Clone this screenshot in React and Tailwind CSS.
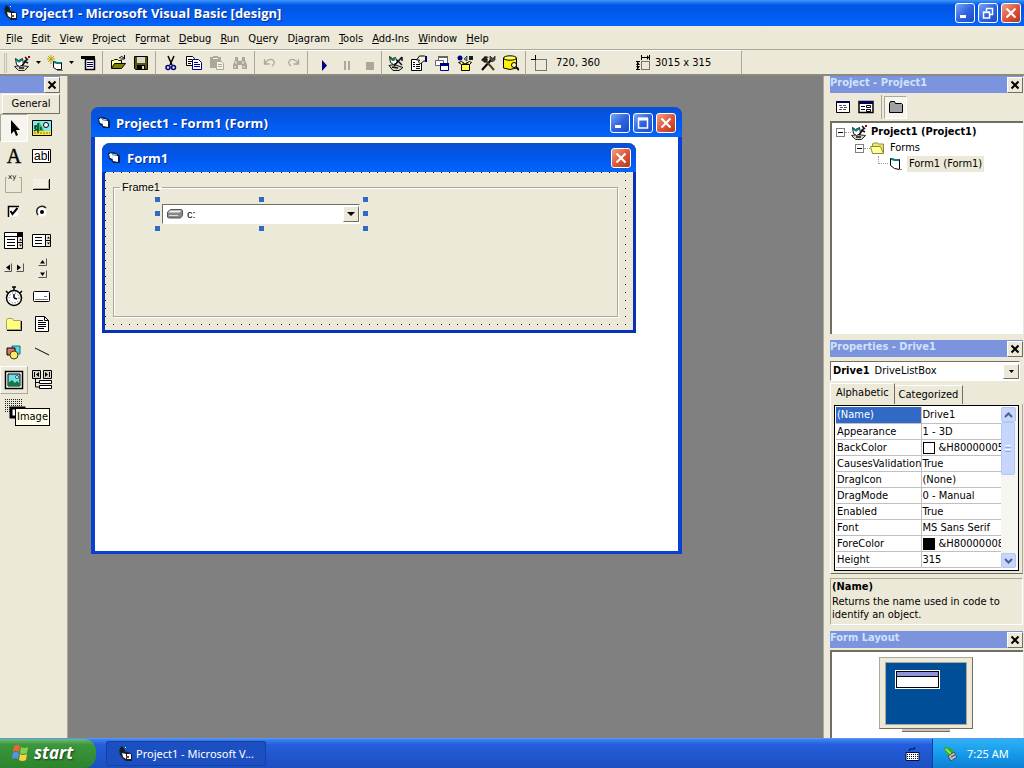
import React, { useState } from "react";

const menus = [
  ["", "F", "ile"],
  ["", "E", "dit"],
  ["", "V", "iew"],
  ["", "P", "roject"],
  ["F", "o", "rmat"],
  ["", "D", "ebug"],
  ["", "R", "un"],
  ["Q", "u", "ery"],
  ["D", "i", "agram"],
  ["", "T", "ools"],
  ["", "A", "dd-Ins"],
  ["", "W", "indow"],
  ["", "H", "elp"],
];

const properties = [
  ["(Name)", "Drive1"],
  ["Appearance", "1 - 3D"],
  ["BackColor", "&H80000005", "bg-white"],
  ["CausesValidation", "True"],
  ["DragIcon", "(None)"],
  ["DragMode", "0 - Manual"],
  ["Enabled", "True"],
  ["Font", "MS Sans Serif"],
  ["ForeColor", "&H80000008", "bg-black"],
  ["Height", "315"],
];

// 16px icons: toolbar, tree and captions
const icons = {
  project: (
    <>
      <path d="M.500 11.500l6-1 8 1-4 4-6 0z" fill="#d8d4c4" stroke="#222" />
      <path d="M1.500 3.500l3 2 4-2 1 6-4 2-3-2z" fill="#fff" stroke="#111" />
      <path d="M2 4.500l3 2 3-2" stroke="#008070" strokeWidth="2" fill="none" />
      <path d="M8 11l5-7M11 2l3 3M10 6l4 2M5 13h5" stroke="#111" strokeWidth="1.500" />
      <path d="M14 1h2v2h-2z" fill="#a00000" />
    </>
  ),
  addForm: (
    <>
      <path d="M4 0v9M0 4h8M1 1l6 6M7 1L1 7" stroke="#b8a000" />
      <path d="M6.500 6.500l3 1h5v7l-5 0-3-2z" fill="#fff" stroke="#111" />
      <path d="M7 7l3 1h4" stroke="#008080" strokeWidth="2" fill="none" />
      <path d="M10 15h6v1h-6z" fill="#777" />
    </>
  ),
  menuEditor: (
    <>
      <path d="M1 1h14v3H1z" fill="#000" />
      <path d="M5.500 4.500h9v10h-9z" fill="#fff" stroke="#000" strokeWidth="1.500" />
      <path d="M7 7.500h6M7 9.500h6M7 11.500h6" stroke="#000060" />
    </>
  ),
  open: (
    <>
      <path d="M1.500 13.500v-8h2l1-1h3l1 1h3v3" fill="#ffff9c" stroke="#000" />
      <path d="M1.500 13.500l3-5h11l-4 5z" fill="#808000" stroke="#000" />
      <path d="M9 3q3-3 5 0M14.500 0v4h-4" fill="none" stroke="#000" />
    </>
  ),
  save: (
    <>
      <path d="M1.500 1.500h13v13h-12l-1-1z" fill="#555510" stroke="#000" />
      <path d="M4 2h8v6H4z" fill="#d8d8c8" />
      <path d="M4 10h8v4H4z" fill="#000" />
      <path d="M9 11h2v3H9z" fill="#d8d8c8" />
    </>
  ),
  cut: (
    <>
      <path d="M5 1l4 9M11 1L7 10" stroke="#000" strokeWidth="1.500" />
      <circle cx="5" cy="12.500" r="2" fill="none" stroke="#000080" strokeWidth="1.500" />
      <circle cx="10.500" cy="12.500" r="2" fill="none" stroke="#000080" strokeWidth="1.500" />
    </>
  ),
  copy: (
    <>
      <path d="M.500 1.500h6l2 2v7h-8z" fill="#fff" stroke="#000" />
      <path d="M2 4.500h4M2 6.500h4M2 8.500h3" stroke="#000" />
      <path d="M6.500 4.500h6l3 3v7h-9z" fill="#fff" stroke="#000080" />
      <path d="M8 7.500h4M8 9.500h6M8 11.500h6" stroke="#000080" />
    </>
  ),
  paste: (
    <>
      <path d="M1 2h3V1h5v1h3v11H1z" fill="#aca899" />
      <path d="M4 3h5v1H4z" fill="#eee" />
      <path d="M7.500 6.500h5l2 2v6h-7z" fill="#f4f2e8" stroke="#aca899" />
      <path d="M9 9.500h4M9 11.500h4" stroke="#aca899" />
    </>
  ),
  find: (
    <>
      <path d="M3 2h3v3l1 1h2l1-1V2h3v3l2 5v4h-5v-4H6v4H1v-4l2-5z" fill="#aca899" />
      <path d="M4 6v3M11 6v3M3 11v2M12 11v2" stroke="#f4f2e8" />
    </>
  ),
  undo: <path d="M2.500 4v5h5M3 8q4-5 8-3 3 3-1 6" fill="none" stroke="#aca899" strokeWidth="1.300" />,
  redo: <path d="M13.500 4v5h-5M13 8q-4-5-8-3-3 3 1 6" fill="none" stroke="#aca899" strokeWidth="1.300" />,
  play: <path d="M6 5v11l5-5.500z" fill="#000080" />,
  pause: <path d="M5 6h2v9H5zM9 6h2v9H9z" fill="#aca899" />,
  stop: <path d="M4 7h8v8H4z" fill="#aca899" />,
  explorer: (
    <>
      <path d="M1 10.500l5-1 9 3-4 3-6 0z" fill="#d8d4c4" stroke="#111" />
      <path d="M1.500 1.500l3 2 3-1 2 5-4 2-3-2z" fill="#fff" stroke="#111" />
      <path d="M2 3l3 2 2-1" stroke="#008040" strokeWidth="2" fill="none" />
      <path d="M6 11l8-9M9 5l5 5M14 2v4M4 12l6 1" stroke="#111" strokeWidth="1.500" />
    </>
  ),
  propsWindow: (
    <>
      <path d="M.500 4.500h10v11H.500z" fill="#fff" stroke="#000" />
      <path d="M2 7.500h2M2 9.500h2M2 11.500h2M5 9.500h4M5 11.500h4M5 13.500h4" stroke="#000" />
      <path d="M5.500 5l3-4h5l2 1v4l-3 0-3 3-2-2 1-2z" fill="#f4f0dc" stroke="#000" />
      <path d="M14 1h2v6h-2z" fill="#000080" />
    </>
  ),
  formLayout: (
    <>
      <path d="M4.500 1.500h9v7h-9z" fill="#fff" stroke="#666" />
      <path d="M4 1h10v2H4z" fill="#666" />
      <path d="M1.500 5.500h8v5h-8z" fill="#fff" stroke="#666" />
      <path d="M6.500 9.500h8v6h-8z" fill="#fff" stroke="#000080" />
      <path d="M6 8h9v3H6z" fill="#000080" />
    </>
  ),
  objectBrowser: (
    <>
      <circle cx="3" cy="3" r="2.500" fill="#000080" />
      <path d="M7 4l3-3v5z" fill="#7fb0b0" stroke="#000" strokeWidth=".6" />
      <path d="M12 1h4v4h-4z" fill="#102020" />
      <path d="M4.500 9.500h8v6h-8z" fill="#ffff40" stroke="#000" />
      <path d="M4.500 9.500l-3-2 3-1 3 2zM12.500 9.500l2-2-2-1-4 2z" fill="#ffff90" stroke="#000" />
    </>
  ),
  toolbox: (
    <>
      <path d="M2 15L11 5" stroke="#000" strokeWidth="2" />
      <path d="M14 15L6 6" stroke="#504020" strokeWidth="2" />
      <path d="M1 5l4-4 4 1-2 1 1 2-3 3z" fill="#222" />
      <path d="M10 5V1l2 2 2 0 1-2v4l-3 2z" fill="#555" stroke="#000" strokeWidth=".6" />
    </>
  ),
  dataView: (
    <>
      <path d="M.500 3v10q6.500 3 13 0V3" fill="#fff200" stroke="#000" />
      <ellipse cx="7" cy="3" rx="6.500" ry="2.200" fill="#ffff60" stroke="#000" />
      <circle cx="11" cy="10" r="2.500" fill="#f8f8c0" stroke="#000" />
      <path d="M13 12l3 3" stroke="#000" strokeWidth="2" />
    </>
  ),
  position: (
    <>
      <path d="M4.500 4.500h11v11h-11z" fill="none" stroke="#000" strokeDasharray="1 1" />
      <path d="M0 4.500h5M4.500 0v5" stroke="#000" />
    </>
  ),
  size: (
    <>
      <path d="M6.500 6.500h8v8h-8z" fill="none" stroke="#000" strokeDasharray="1 1" />
      <path d="M6.500 0v5M14.500 0v5M7 2.500h7M1 6.500h4M1 14.500h4M2.500 7v7" stroke="#000" />
      <path d="M12 0v5l2-2.500zM1 11h4l-2 3zM1 10h4l-2-3z" fill="#000" />
    </>
  ),
  viewCode: (
    <>
      <path d="M1.500 2.500h13v11h-13z" fill="#fff" stroke="#000" />
      <path d="M1 2h14v2H1z" fill="#000060" />
      <path d="M4 6.500h7M5 8.500h7M4 10.500h7" stroke="#555" strokeDasharray="3 1" />
    </>
  ),
  viewObject: (
    <>
      <path d="M1 2.500h14v11H1z" fill="#fff" stroke="#000" strokeWidth="1.500" />
      <path d="M1 2h14v3H1z" fill="#000060" />
      <path d="M3 7.500h4M3 10.500h4M8.500 6.500h4v2h-4zM8.500 10.500h4v2h-4z" stroke="#000" fill="none" />
    </>
  ),
  grayFolder: <path d="M1.500 13.500v-9l1-2h4l1 2h6l1 1v8z" fill="#a0a0a0" stroke="#000" />,
  openFolder: (
    <>
      <path d="M2.500 13V4l1-1h4l1 1h5v9z" fill="#e8e878" stroke="#8c8c30" />
      <path d="M.500 6.500h10l3 7h-11z" fill="#ffffa0" stroke="#8c8c30" />
    </>
  ),
  form: (
    <>
      <path d="M2.500 2.500l4 1h5v10l-5-1-4-3z" fill="#fff" stroke="#000" />
      <path d="M3 3l4 1h4" stroke="#008080" strokeWidth="2" fill="none" />
      <path d="M11 13.500h3" stroke="#777" />
    </>
  ),
  caption: (
    <>
      <path d="M2 3l5-1 5 2 2 2v7l-7 0-1-2-3-2z" fill="#06184c" />
      <path d="M3 4l3 0 1 5-3-1z" fill="#fff" />
      <path d="M6 5l6 1 0 6-5-1z" fill="#fff" />
      <path d="M4 3.500l7 1.500" stroke="#b8d8e8" />
    </>
  ),
  vb: (
    <>
      <path d="M4 0l3 2 1 3-3 2-3-2z" fill="#102020" />
      <path d="M2 7l4-2 5 1 4 2v7l-6 0-4-3z" fill="#142028" />
      <path d="M5 7l4 1v5L6 11zM10 8h4v5h-4z" fill="#fff" />
      <path d="M9 10h3v2H9z" fill="#803838" />
      <path d="M8 1l1 1" stroke="#fff" />
    </>
  ),
  keyboard: (
    <>
      <path d="M2 6.500h13v8H2z" fill="#fff" stroke="#001040" />
      <path d="M3 8.500h11M3 10.500h11M3 12.500h11" stroke="#001040" strokeDasharray="1 1" />
      <path d="M5 5q0-3 3-2t3-2" stroke="#001040" fill="none" />
    </>
  ),
  tray: (
    <>
      <path d="M1 1l7 1 3 4-4 5-4-3z" fill="#30b030" />
      <path d="M3 3l5 5" stroke="#b0f060" strokeWidth="1.500" />
      <path d="M5 10l6-4 3 5-6 4z" fill="#b8c0c8" stroke="#405060" />
      <path d="M8 11l4-2" stroke="#333" />
    </>
  ),
};

// 20px toolbox icons
const tools = [
  ["Pointer", <path d="M7 2v14l3-3 2 5 2-1-2-5h4z" fill="#000" />],
  ["PictureBox", (
    <>
      <path d="M.500 2.500h19v15H.500z" fill="#7fe8f0" stroke="#000" />
      <path d="M1 13h18v4H1z" fill="#ffe640" />
      <path d="M3 13l4-9 2 3 3 6z" fill="#40b060" />
      <path d="M6 15V5M3 11V8h2M9 12V9M2 13l3-2" stroke="#004820" strokeWidth="1.500" />
      <circle cx="14" cy="7" r="2.500" fill="#fff" stroke="#000" />
      <path d="M2 15h16" stroke="#907000" strokeDasharray="2 1" />
    </>
  )],
  ["Label", (
    <text x="10" y="17" textAnchor="middle" fontSize="20" stroke="#000" strokeWidth=".4" fontFamily="Liberation Serif, serif">A</text>
  )],
  ["TextBox", (
    <>
      <path d="M.500 3.500h18v13H.500z" fill="#fff" stroke="#000" />
      <text x="2" y="14" fontSize="12" fontFamily="Liberation Sans, sans-serif">ab</text>
      <path d="M16.500 5v10" stroke="#000" />
    </>
  )],
  ["Frame", (
    <>
      <path d="M3 3.500H1.500v15h16v-15H15" fill="none" stroke="#aca899" />
      <text x="4" y="5" fontSize="7" fontFamily="DejaVu Sans, sans-serif">xy</text>
    </>
  )],
  ["CommandButton", (
    <>
      <path d="M1 5h17v11H1z" fill="#f4f1e4" />
      <path d="M1 15.500h16.500V5" fill="none" stroke="#000" />
      <path d="M2 14.500h14.500V6" fill="none" stroke="#aca899" />
    </>
  )],
  ["CheckBox", (
    <>
      <path d="M4.500 4.500h10v10h-10z" fill="#fff" />
      <path d="M4.500 15V4.500H15" fill="none" stroke="#000" strokeWidth="1.500" />
      <path d="M6.500 9l2 3 5-6" fill="none" stroke="#000" strokeWidth="2" />
    </>
  )],
  ["OptionButton", (
    <>
      <circle cx="10" cy="10" r="4.500" fill="#fff" />
      <path d="M6 13a5 5 0 0 1 8-7" fill="none" stroke="#222" strokeWidth="1.500" />
      <circle cx="10" cy="10" r="2" fill="#000" />
    </>
  )],
  ["ComboBox", (
    <>
      <path d="M.500 2.500h13v16H.500z" fill="#fff" stroke="#000" />
      <path d="M13.500 2.500h5v16h-5zM1 6.500h18M14 12.500h5" fill="#ece9d8" stroke="#000" />
      <path d="M14 2h5v4h-5z" fill="#000" />
      <path d="M3 9.500h8M3 12.500h8M3 15.500h8" stroke="#000" />
      <path d="M15 10.500h3l-1.500-2zM15 14.500h3l-1.500 2z" fill="#000" />
    </>
  )],
  ["ListBox", (
    <>
      <path d="M.500 4.500h13v12H.500z" fill="#fff" stroke="#000" />
      <path d="M13.500 4.500h5v12h-5zM14 10.500h5" fill="#ece9d8" stroke="#000" />
      <path d="M3 7.500h7M3 10.500h7M3 13.500h7" stroke="#000" />
      <path d="M15 8.500h3l-1.500-2zM15 12.500h3l-1.500 2z" fill="#000" />
    </>
  )],
  ["HScrollBar", (
    <>
      <path d="M.500 13.500h7v-8M12.500 13.500h7v-8" fill="none" stroke="#555" />
      <path d="M2 9.500l4-3v6zM17 9.500l-4-3v6z" fill="#000" />
    </>
  )],
  ["VScrollBar", (
    <>
      <path d="M6.500 7.500h8v-7M6.500 19.500h8v-7" fill="none" stroke="#555" />
      <path d="M8 5.500h5L10.500 2zM8 14.500h5L10.500 18z" fill="#000" />
    </>
  )],
  ["Timer", (
    <>
      <circle cx="10" cy="12" r="7.500" fill="#fff" stroke="#000" strokeWidth="1.500" />
      <circle cx="10" cy="12" r="5" fill="none" stroke="#444" strokeDasharray="1 2" />
      <path d="M10 12V8M10 12l3 1M8 1h4M10 1v3M2 5l2 2M18 5l-2 2" stroke="#000" strokeWidth="1.500" />
    </>
  )],
  ["DriveListBox", (
    <>
      <rect x="1.500" y="5.500" width="16" height="10" rx="1" fill="#fff" stroke="#000" />
      <path d="M3 13.500h13M12 10.500h3" stroke="#777" />
    </>
  )],
  ["DirListBox", (
    <>
      <path d="M2.500 15.500v-9l1-2h5l1 2h7v9z" fill="#ffff80" stroke="#aca060" />
      <path d="M3 16.500h14.500V7" fill="none" stroke="#000" />
    </>
  )],
  ["FileListBox", (
    <>
      <path d="M3.500 2.500h9l4 4v11h-13z" fill="#fff" stroke="#000" />
      <path d="M12.500 2.500v4h4M6 6.500h5M6 8.500h8M6 10.500h8M6 12.500h8M6 14.500h6" fill="none" stroke="#000" />
    </>
  )],
  ["Shape", (
    <>
      <path d="M8 4h8v8H8z" fill="#50d8e0" stroke="#007090" />
      <path d="M3 6h8v7H3z" fill="#e07070" stroke="#000" />
      <circle cx="10" cy="13" r="4" fill="#ffe870" stroke="#504000" />
    </>
  )],
  ["Line", <path d="M3 6l14 7" stroke="#000" />],
  ["Image", (
    <>
      <path d="M1.500 1.500h17v17h-17z" fill="#fff" stroke="#000" strokeWidth="1.500" />
      <path d="M4 4h12v12H4z" fill="#70e0e8" stroke="#000" />
      <path d="M4 16v-3l4-3 3 3 2-2 3 3v2z" fill="#107840" />
      <circle cx="13" cy="7" r="1.500" fill="#fff" stroke="#000" strokeWidth=".6" />
    </>
  )],
  ["Data", (
    <>
      <path d="M.500 .500h8v8h-8zM11.500 .500h8v8h-8z" fill="#d8d4c8" stroke="#000" />
      <path d="M2.500 2v5M17.500 2v5" stroke="#000" />
      <path d="M7 2v5L4 4.500zM13 2v5l3-2.500z" fill="#000" />
      <path d="M3.500 9v8h4M4 12.500h3" fill="none" stroke="#000" />
      <path d="M7.500 10.500h12v3h-12zM7.500 15.500h12v3h-12z" fill="#fff" stroke="#000" />
    </>
  )],
  ["OLE", (
    <>
      <path d="M1 1.500h17M1 3.500h17M1 5.500h17M1 7.500h17M1 9.500h17M1 11.500h17M1 13.500h17" stroke="#222" strokeDasharray="1 1" />
      <path d="M7 10h13v9H7z" fill="#fff" stroke="#000" strokeWidth="3" />
    </>
  )],
];

function Icon({ name, size = 16 }) {
  return (
    <svg width={size} height={size} viewBox="0 0 16 16" className="shrink-0" fill="none" aria-hidden="true">
      {icons[name]}
    </svg>
  );
}

function CaptionButton({ kind }) {
  const color =
    kind === "Close"
      ? "bg-linear-to-br from-[#f0a088] via-[#e0563a] to-[#b83818]"
      : "bg-linear-to-br from-[#7ca4f4] via-[#3064e0] to-[#1c4cc8]";
  return (
    <button aria-label={kind} className={`w-5 h-5 shrink-0 rounded-[3px] border border-white ${color}`}>
      <svg viewBox="0 0 18 18" className="w-full h-full" fill="none" stroke="#fff" aria-hidden="true">
        {kind === "Close" && <path d="M4.500 4.500l9 9M13.500 4.500l-9 9" strokeWidth="2.200" />}
        {kind === "Minimize" && <path d="M4 12.500h6" strokeWidth="3" />}
        {kind === "Maximize" && <path d="M4.500 4v10h9V4M4 4.500h10" strokeWidth="1.500" />}
        {kind === "Maximize" && <path d="M4 5h10" strokeWidth="3" />}
        {kind === "Restore" && (
          <path d="M4.500 8h6v6h-6zM4 8.500h7M7.500 7V4.500h6v6H11M7 4.500h7" strokeWidth="1.500" />
        )}
      </svg>
    </button>
  );
}

function PanelHeader({ title }) {
  return (
    <div className="flex h-[17px] shrink-0 items-center justify-between bg-[#7c94de]">
      <h2 className="pb-1 font-bold text-[#cfe2fc] whitespace-nowrap">{title}</h2>
      <button
        aria-label="Close"
        className="flex h-4 w-4 shrink-0 items-center justify-center border border-t-white border-l-white border-r-[#716f64] border-b-[#716f64] bg-[#ece9d8]"
      >
        <svg width="10" height="10" viewBox="0 0 10 10" stroke="#000" strokeWidth="2" aria-hidden="true">
          <path d="M1.500 1.500l7 7M8.500 1.500l-7 7" />
        </svg>
      </button>
    </div>
  );
}

function ToolButton({ name, label }) {
  return (
    <button aria-label={label || name} className="flex h-6 w-[23px] shrink-0 items-center justify-center">
      <Icon name={name} />
    </button>
  );
}

function DropArrow() {
  return (
    <svg width="5" height="3" viewBox="0 0 5 3" className="shrink-0" aria-hidden="true">
      <path d="M0 0h5L2.500 3z" fill="#000" />
    </svg>
  );
}

function Separator() {
  return <div className="mx-[3px] h-6 w-px shrink-0 bg-[#aca899]" />;
}

function Toolbar() {
  return (
    <div className="flex h-[27px] shrink-0 border-t border-b-2 border-t-[#aca899] border-b-[#8c8a80]">
      <div className="flex items-center border-t border-r border-t-white border-r-[#aca899] pr-[30px] pl-1">
        <div className="mr-[3px] h-5 w-[3px] border-x border-[#c4c0b0]" />
        <ToolButton name="project" label="Add Project" />
        <button aria-label="Project types" className="flex w-[10px] justify-center"><DropArrow /></button>
        <ToolButton name="addForm" label="Add Form" />
        <button aria-label="Form types" className="flex w-[10px] justify-center"><DropArrow /></button>
        <ToolButton name="menuEditor" label="Menu Editor" />
        <Separator />
        <ToolButton name="open" />
        <ToolButton name="save" />
        <Separator />
        <ToolButton name="cut" />
        <ToolButton name="copy" />
        <ToolButton name="paste" />
        <ToolButton name="find" />
        <Separator />
        <ToolButton name="undo" />
        <ToolButton name="redo" />
        <Separator />
        <div className="flex pl-px">
          <ToolButton name="play" />
          <ToolButton name="pause" />
          <ToolButton name="stop" />
        </div>
        <div className="h-6 w-px shrink-0 bg-[#aca899]" />
        <div className="flex pl-[2px]">
          <ToolButton name="explorer" />
          <ToolButton name="propsWindow" />
          <ToolButton name="formLayout" />
          <ToolButton name="objectBrowser" />
          <ToolButton name="toolbox" />
          <ToolButton name="dataView" />
        </div>
        <Separator />
        <div className="flex w-[106px] items-center gap-[9px] pl-[2px]">
          <Icon name="position" />
          <span>720, 360</span>
        </div>
        <div className="flex items-center gap-1 whitespace-nowrap">
          <Icon name="size" />
          <span>3015 x 315</span>
        </div>
      </div>
    </div>
  );
}

function Toolbox() {
  const [active, setActive] = useState("Pointer");

  return (
    <aside className="w-[68px] shrink-0 border-r border-[#aca899] pr-[7px]">
      <PanelHeader title="" />
      <button className="mt-px ml-[2px] h-5 w-[58px] border border-t-white border-l-white border-r-[#716f64] border-b-[#716f64]">
        General
      </button>
      <div className="relative grid grid-cols-[28px_28px]">
        {tools.map(([name, art]) => (
          <button
            key={name}
            aria-label={name}
            onClick={() => setActive(name)}
            className={`flex h-7 w-7 items-center justify-center ${
              active === name
                ? "border border-t-[#aca899] border-l-[#aca899] border-r-white border-b-white bg-[#f6f4ec]"
                : name === "Image"
                ? "border border-t-white border-l-white border-r-[#aca899] border-b-[#aca899]"
                : ""
            }`}
          >
            <svg width="20" height="20" viewBox="0 0 20 20" className="shrink-0 overflow-visible" fill="none" aria-hidden="true">
              <g fill="#000">{art}</g>
            </svg>
          </button>
        ))}
        <div role="tooltip" className="absolute bottom-[-4px] left-[15px] border border-black bg-[#ffffe9] px-px leading-4">
          Image
        </div>
      </div>
    </aside>
  );
}

const handles = [
  "left-[-8px] top-[-8px]",
  "left-[96px] top-[-8px]",
  "right-[-9px] top-[-8px]",
  "left-[-8px] top-[6px]",
  "right-[-9px] top-[6px]",
  "left-[-8px] bottom-[-8px]",
  "left-[96px] bottom-[-8px]",
  "right-[-9px] bottom-[-8px]",
];

const titleBar =
  "flex shrink-0 items-center bg-linear-to-b from-[#0a4fd0] via-[#0058ee] to-[#0464fc] font-['Open_Sans',sans-serif] text-[13px] font-bold text-white [text-shadow:1px_1px_#0a2a8c]";

function Designer() {
  return (
    <main className="relative min-w-0 flex-1 overflow-hidden bg-[#808080]">
      <section className="absolute top-[31px] left-[23px] flex h-[447px] w-[591px] flex-col rounded-t-lg border-x-4 border-b-[3px] border-[#0a3fd4] bg-white">
        <header className={`${titleBar} -mx-1 h-[30px] gap-1 rounded-t-lg px-[6px] pt-px pl-[5px]`}>
          <Icon name="caption" />
          <h2 className="grow">Project1 - Form1 (Form)</h2>
          <div className="flex gap-[3px]">
            <CaptionButton kind="Minimize" />
            <CaptionButton kind="Maximize" />
            <CaptionButton kind="Close" />
          </div>
        </header>
        <div className="mt-[6px] ml-[7px] flex h-[190px] w-[534px] flex-col rounded-t-lg border-x-[3px] border-b-[3px] border-[#0831b8] bg-[#ece9d8]">
          <header className={`${titleBar} -mx-[3px] h-[29px] gap-[5px] rounded-t-lg pr-[5px] pl-1`}>
            <Icon name="caption" />
            <h3 className="grow">Form1</h3>
            <CaptionButton kind="Close" />
          </header>
          <div className="flex-1 bg-[conic-gradient(from_270deg_at_1px_1px,#000_90deg,transparent_0)] bg-[length:8px_8px] pt-2 pr-[15px] pb-[13px] pl-2">
            <div className="h-full bg-[#ece9d8]">
              <fieldset className="h-full border border-[#aca899] pl-12 shadow-[1px_1px_#fff,inset_1px_1px_#fff]">
                <legend className="-ml-[42px] px-[2px] font-['Liberation_Sans',sans-serif] text-[11px] leading-[14px]">Frame1</legend>
                <div className="relative mt-[10px] flex h-5 w-[198px] items-center border border-t-[#716f64] border-l-[#716f64] border-r-white border-b-white bg-white">
                  <svg width="16" height="10" viewBox="0 0 16 10" className="ml-1 shrink-0" aria-hidden="true">
                    <path d="M.500 3l3-2.500h11l1 1v5l-2 2.500h-12l-1-1z" fill="#888" stroke="#555" />
                    <path d="M1 3.500l2.500-2h11l-2 2z" fill="#eee" />
                    <path d="M2 6.500h9" stroke="#ddd" />
                  </svg>
                  <select aria-label="Drive" className="h-full grow appearance-none pl-1 font-['Liberation_Sans',sans-serif] text-[11px] outline-none">
                    <option>c:</option>
                  </select>
                  <span className="pointer-events-none flex h-4 w-4 items-center justify-center border border-t-white border-l-white border-r-[#716f64] border-b-[#716f64] bg-[#ece9d8]">
                    <svg width="8" height="4" viewBox="0 0 8 4" aria-hidden="true"><path d="M0 0h8L4 4z" /></svg>
                  </span>
                  {handles.map((place) => (
                    <i key={place} className={`absolute h-[5px] w-[5px] bg-[#316ac5] ${place}`} />
                  ))}
                </div>
              </fieldset>
            </div>
          </div>
        </div>
      </section>
    </main>
  );
}

function Expander() {
  return (
    <button aria-label="Collapse" className="flex h-[9px] w-[9px] shrink-0 items-center justify-center border border-[#808080] bg-white">
      <span className="h-px w-[5px] bg-black" />
    </button>
  );
}

function ProjectPanel() {
  return (
    <section>
      <PanelHeader title="Project - Project1" />
      <div className="flex h-7 items-center">
        <div className="flex items-center border-r border-[#aca899] pr-1 pl-px">
          <ToolButton name="viewCode" />
          <ToolButton name="viewObject" />
        </div>
        <button aria-label="Toggle Folders" className="ml-[2px] flex h-[23px] w-[23px] items-center justify-center border border-t-[#aca899] border-l-[#aca899] border-r-white border-b-white bg-[#f6f4ec]">
          <Icon name="grayFolder" />
        </button>
      </div>
      <ul className="h-[213px] border-t-2 border-l-2 border-[#716f64] bg-white pt-px leading-4">
        <li className="flex items-center pl-1">
          <Expander />
          <span className="w-[6px] border-t border-dotted border-[#999]" />
          <Icon name="project" />
          <strong className="ml-1 whitespace-nowrap">Project1 (Project1)</strong>
        </li>
        <li className="flex items-center pl-[23px]">
          <Expander />
          <span className="w-[6px] border-t border-dotted border-[#999]" />
          <Icon name="openFolder" />
          <span className="ml-1">Forms</span>
        </li>
        <li className="flex items-center pl-[46px]">
          <span className="h-2 w-[10px] self-start border-b border-l border-dotted border-[#999]" />
          <Icon name="form" />
          <span className="ml-[3px] bg-[#ece9d8] px-[2px] whitespace-nowrap">Form1 (Form1)</span>
        </li>
      </ul>
    </section>
  );
}

function ScrollButton({ up }) {
  return (
    <button aria-label={up ? "Scroll up" : "Scroll down"} className="flex h-[15px] w-[15px] shrink-0 items-center justify-center rounded-xs border border-[#b4c8f4] bg-[#c6d6fc]">
      <svg width="9" height="6" viewBox="0 0 9 6" fill="none" stroke="#4d6185" strokeWidth="2" aria-hidden="true">
        <path d={up ? "M1 5l3.500-3.500L8 5" : "M1 1l3.500 3.500L8 1"} />
      </svg>
    </button>
  );
}

function PropertiesPanel() {
  const [selected, setSelected] = useState("(Name)");

  return (
    <section className="mt-[6px]">
      <PanelHeader title="Properties - Drive1" />
      <div className="mt-1 mr-[3px] flex h-5 items-center border border-t-[#716f64] border-l-[#716f64] border-r-white border-b-white bg-white pl-[2px]">
        <label htmlFor="object" className="font-bold">Drive1</label>
        <select id="object" className="ml-[5px] min-w-0 grow appearance-none outline-none">
          <option>DriveListBox</option>
        </select>
        <span className="pointer-events-none flex h-[15px] w-4 items-center justify-center border border-t-white border-l-white border-r-[#716f64] border-b-[#716f64] bg-[#ece9d8]">
          <DropArrow />
        </span>
      </div>
      <div role="tablist" className="mt-[2px] flex h-[21px] items-end">
        <button role="tab" aria-selected="true" className="h-full border-t border-r border-l border-t-white border-l-white border-r-[#716f64] px-[5px] pb-[3px]">
          Alphabetic
        </button>
        <button role="tab" aria-selected="false" className="h-[19px] border-t border-r border-t-white border-r-[#716f64] px-1">
          Categorized
        </button>
      </div>
      <div className="border-r border-b border-l border-l-white border-r-[#aca899] border-b-[#716f64] px-[3px] pt-px pb-[2px]">
        <div className="flex h-[166px] overflow-hidden border border-black bg-white pt-px pb-[2px] pl-px">
          <table className="w-full min-w-0 table-fixed border-collapse self-start leading-[15px]">
            <tbody>
              {properties.map(([name, value, swatch]) => (
                <tr key={name} onClick={() => setSelected(name)} className="h-4 border-b border-[#c0c0c0]">
                  <th
                    scope="row"
                    className={`w-[85px] overflow-hidden border-r border-[#c0c0c0] p-0 pl-px text-left font-normal whitespace-nowrap ${
                      selected === name ? "bg-[#316ac5] text-white" : ""
                    }`}
                  >
                    {name}
                  </th>
                  <td className="overflow-hidden p-0 pl-px whitespace-nowrap">
                    {swatch && <span className={`mr-1 inline-block h-3 w-3 border border-black align-middle ${swatch}`} />}
                    {value}
                  </td>
                </tr>
              ))}
            </tbody>
          </table>
          <div className="flex w-[17px] shrink-0 flex-col justify-between bg-[#f6f5f0]">
            <div>
              <ScrollButton up />
              <div className="flex h-[53px] w-[14px] flex-col items-center justify-center gap-px rounded-xs border border-[#b4c8f4] bg-[#c6d6fc]">
                <span className="h-px w-[6px] bg-white" />
                <span className="h-px w-[6px] bg-[#8cb0f8]" />
                <span className="h-px w-[6px] bg-white" />
                <span className="h-px w-[6px] bg-[#8cb0f8]" />
              </div>
            </div>
            <ScrollButton />
          </div>
        </div>
      </div>
      <div className="mt-1 h-[47px] border border-t-[#aca899] border-l-[#aca899] border-r-white border-b-white px-px pt-px leading-[13px]">
        <strong className="block pb-[2px]">(Name)</strong>
        <p>Returns the name used in code to identify an object.</p>
      </div>
    </section>
  );
}

function FormLayoutPanel() {
  return (
    <section className="mt-[6px] flex min-h-0 flex-1 flex-col">
      <PanelHeader title="Form Layout" />
      <div className="mt-[2px] flex flex-1 flex-col items-center overflow-hidden border-t-2 border-l-2 border-[#716f64] bg-white pt-[5px] pr-[3px]">
        <div className="h-[72px] w-[94px] shrink-0 border border-t-[#aca899] border-l-[#aca899] border-r-[#716f64] border-b-[#716f64] bg-[#ece9d8] p-[5px] pt-1">
          <div className="h-[63px] border border-[#aca899] bg-[#004e98] pt-[7px] pl-[9px]">
            <div className="h-[19px] w-[45px] border border-white bg-black p-px">
              <div className="h-[4px] bg-[#8c94dc]" />
              <div className="mt-px h-[10px] bg-white" />
            </div>
          </div>
        </div>
        <div className="h-[3px] w-12 shrink-0 border-b border-[#716f64] bg-[#c8c4b4]" />
      </div>
    </section>
  );
}

function Taskbar() {
  return (
    <footer className="flex h-[30px] shrink-0 border-t border-[#5a94f4] bg-linear-to-b from-[#3f84f0] via-[#245edb] via-20% to-[#1c4fc0] font-['Noto_Sans',sans-serif] text-[11px] text-white">
      <button className="flex w-24 shrink-0 items-center gap-1 rounded-r-xl bg-linear-to-b from-[#6cbc6c] via-[#3c963c] via-20% to-[#2c842c] pb-[2px] pl-[10px] font-['Open_Sans',sans-serif] text-[17px] leading-5 font-bold italic [text-shadow:1px_1px_2px_#143c14]">
        <svg width="20" height="20" viewBox="0 0 20 20" aria-hidden="true">
          <path d="M4 3q3-2 6 0l-1 6q-3-2-6 0z" fill="#f0603c" />
          <path d="M11 4q3 2 7 0l-1 6q-4 2-7 0z" fill="#84d050" />
          <path d="M3 10q3-2 6 0l-1 6q-3-2-6 0z" fill="#5c90f0" />
          <path d="M10 11q3 2 7 0l-1 6q-4 2-7 0z" fill="#fcd040" />
        </svg>
        start
      </button>
      <button className="my-[2px] ml-[10px] flex w-40 shrink-0 items-center gap-[3px] rounded-xs border border-[#1440a8] bg-[#1c50c0] pl-[10px] whitespace-nowrap">
        <Icon name="vb" />
        Project1 - Microsoft V...
      </button>
      <div className="ml-auto flex items-center pr-3"><Icon name="keyboard" /></div>
      <div className="flex w-[92px] shrink-0 items-center gap-2 border-l border-[#0c3c9c] bg-linear-to-b from-[#30b0f4] via-[#149cec] to-[#1080d4] pl-[10px] whitespace-nowrap">
        <Icon name="tray" />
        7:25 AM
      </div>
    </footer>
  );
}

function App() {
  return (
    <div className="flex h-screen flex-col overflow-hidden bg-[#ece9d8] font-['DejaVu_Sans_Condensed','DejaVu_Sans',sans-serif] text-[11px] leading-[14px] text-black">
      <header className="flex h-[26px] shrink-0 items-center gap-[3px] bg-linear-to-b from-[#3c96fc] via-[#0054e3] via-20% to-[#0464fc] pr-[3px] pl-[2px] text-white">
        <Icon name="vb" />
        <h1 className="grow font-['Open_Sans',sans-serif] text-[13px] font-bold [text-shadow:1px_1px_#0a2a8c]">
          Project1 - Microsoft Visual Basic [design]
        </h1>
        <div className="flex gap-[3px]">
          <CaptionButton kind="Minimize" />
          <CaptionButton kind="Restore" />
          <CaptionButton kind="Close" />
        </div>
      </header>
      <nav className="flex h-[23px] shrink-0 items-center gap-[9px] pt-[2px] pl-[6px]">
        {menus.map(([before, key, after]) => (
          <button key={before + key + after}>
            {before}
            <u>{key}</u>
            {after}
          </button>
        ))}
      </nav>
      <Toolbar />
      <div className="flex min-h-0 flex-1">
        <Toolbox />
        <Designer />
        <aside className="flex w-[201px] shrink-0 flex-col border-l border-[#aca899] pr-px pl-[6px]">
          <ProjectPanel />
          <PropertiesPanel />
          <FormLayoutPanel />
        </aside>
      </div>
      <Taskbar />
    </div>
  );
}

export default App;
